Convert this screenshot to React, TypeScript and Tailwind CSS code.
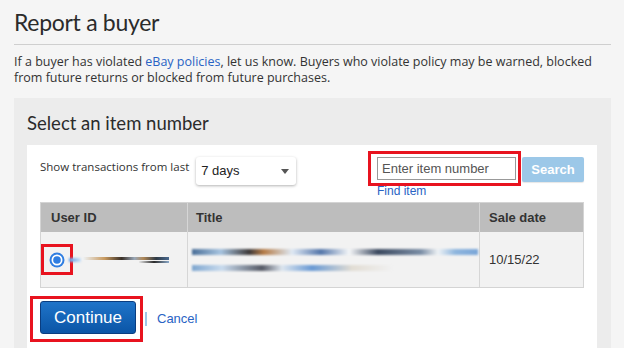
function Radio() {
  return (
    <svg width="18" height="18" viewBox="0 0 18 18">
      <circle cx="9" cy="9" r="7.5" fill="#2f7de1" />
      <circle cx="9" cy="9" r="5.5" fill="#ffffff" />
      <circle cx="9" cy="9" r="3.8" fill="#2f7de1" />
    </svg>
  );
}

export default function App() {
  return (
    <div className="min-h-[348px] w-[624px] overflow-hidden bg-[#f5f5f5] pl-[14px] pr-[13px] font-['Open_Sans',sans-serif] text-[#333]">
      <h1 className="pt-[4px] font-['Lato',sans-serif] text-[23px] leading-[36px] tracking-[-0.3px] text-[#2b2b2b]">Report a buyer</h1>
      <div className="mt-[4px] h-px w-[597px] bg-[#cfcfcf]" />

      <p className="mt-[9px] w-[597px] text-[12.5px] leading-[16px] text-[#333]">
        If a buyer has violated <span className="text-[#2963c4]">eBay policies</span>, let us know. Buyers who violate policy may be warned, blocked
        from future returns or blocked from future purchases.
      </p>

      {/* Panel */}
      <div className="mt-[12px] w-[597px] bg-[#ececec] pl-[13px] pr-[14px] pt-[13px]">
        <h2 className="font-['Lato',sans-serif] text-[18.5px] leading-[24px] text-[#2b2b2b]">Select an item number</h2>

        <div className="mt-[10px] h-[220px] bg-white px-[13px] pt-[12px]">
          {/* filter row */}
          <div className="flex h-[45px] items-start">
            <span className="mt-[2px] text-[11.5px] leading-[16px]">Show transactions from last</span>
            <div className="ml-[7px] flex h-[28px] w-[100px] items-center justify-between rounded-[3px] bg-white pl-[5px] pr-[7px] font-['Liberation_Sans',sans-serif] text-[13px] text-[#222] shadow-[0_1px_3px_rgba(0,0,0,0.3)]">
              <span>7 days</span>
              <svg width="8" height="5" viewBox="0 0 8 5">
                <path d="M0 0h8L4 5z" fill="#555" />
              </svg>
            </div>

            <div className="ml-auto -mt-[6px] flex flex-col">
              <div className="flex items-start">
                <div className="border-[3px] border-[#e8131f] pl-[6px] pr-[2px] pt-[3px] pb-[3px]">
                  <div className="flex h-[23px] w-[139px] items-center border border-[#999] pl-[4px] font-['Liberation_Sans',sans-serif] text-[13px] text-[#555]">
                    Enter item number
                  </div>
                </div>
                <div className="ml-px mt-[6px] flex h-[25px] w-[62px] items-center justify-center rounded-[2px] bg-[#9cc8e8] font-['Liberation_Sans',sans-serif] text-[13px] font-bold text-white shadow-[0_1px_1px_rgba(0,0,0,0.1)]">
                  Search
                </div>
              </div>
              <span className="ml-[9px] mt-[-2px] font-['Liberation_Sans',sans-serif] text-[12px] leading-[14px] text-[#2963c4]">Find item</span>
            </div>
          </div>

          {/* table */}
          <div className="border border-[#d4d4d4] font-['Liberation_Sans',sans-serif] text-[13px]">
            <div className="flex h-[29px] bg-[#bdbdbd] font-bold text-[#333]">
              <div className="flex w-[146px] items-center pl-[10px]">User ID</div>
              <div className="flex w-[292px] items-center border-l border-[#d6d6d6] pl-[8px]">Title</div>
              <div className="flex flex-1 items-center border-l border-[#d6d6d6] pl-[9px]">Sale date</div>
            </div>
            <div className="flex h-[55px] bg-[#f2f2f2]">
              <div className="flex w-[146px] items-center">
                <div className="flex h-[31px] w-[32px] items-center justify-center border-[3px] border-[#e8131f]">
                  <Radio />
                </div>
                <div className="ml-[-4px] h-[4px] w-[12px] bg-[linear-gradient(90deg,#5b9be8,#cfe3f7)] blur-[1px]" />
                <div className="relative ml-[2px] h-[8px] w-[86px]">
                  <div className="absolute left-0 top-[1px] h-[3px] w-[86px] bg-[linear-gradient(90deg,#eef2f5,#c89a60_25%,#3a3028_45%,#9aa8b8_60%,#b08858_70%,#2f3a45_85%,#4a6a90)] blur-[0.6px]" />
                  <div className="absolute right-0 top-[5px] h-[2px] w-[30px] bg-[linear-gradient(90deg,#e8e8e8,#2a2a2a,#8aa8c8)] blur-[0.5px]" />
                </div>
              </div>
              <div className="flex w-[292px] flex-col justify-center gap-[10px] border-l border-[#d6d6d6] pl-[4px]">
                <div className="h-[6px] w-[286px] bg-[linear-gradient(90deg,#4a6f98,#a7c4e0_10%,#3e3a3a_20%,#b57c48_25%,#dfe9f4_35%,#5577aa_45%,#f4f6f8_55%,#3c4a60_65%,#7b8ea6_80%,#eef2f5_86%,#8fb6de_92%,#7aa6d8)] blur-[0.8px]" />
                <div className="h-[6px] w-[200px] bg-[linear-gradient(90deg,#7ea6cf,#c9dbee_15%,#565a66_35%,#dde6ef_45%,#6a9ad4_60%,#e2ddd4_80%,#f1f1f1)] blur-[0.8px]" />
              </div>
              <div className="flex flex-1 items-center border-l border-[#d6d6d6] pl-[9px] text-[#333]">
                10/15/22
              </div>
            </div>
          </div>

          {/* actions */}
          <div className="ml-[-10px] mt-[8px] flex items-center">
            <div className="border-[3px] border-[#e8131f] pl-[7px] pr-[4px] pt-[2px] pb-[5px]">
              <div className="flex h-[33px] w-[96px] items-center justify-center rounded-[3px] border border-[#0a3d80] bg-[linear-gradient(180deg,#1f74c9,#0b55a6)] font-['Liberation_Sans',sans-serif] text-[17px] text-white">
                Continue
              </div>
            </div>
            <span className="ml-[2px] h-[14px] w-[2px] bg-[#9cc8e8]" />
            <span className="ml-[10px] font-['Liberation_Sans',sans-serif] text-[13px] text-[#2963c4]">Cancel</span>
          </div>
        </div>
      </div>
    </div>
  );
}
